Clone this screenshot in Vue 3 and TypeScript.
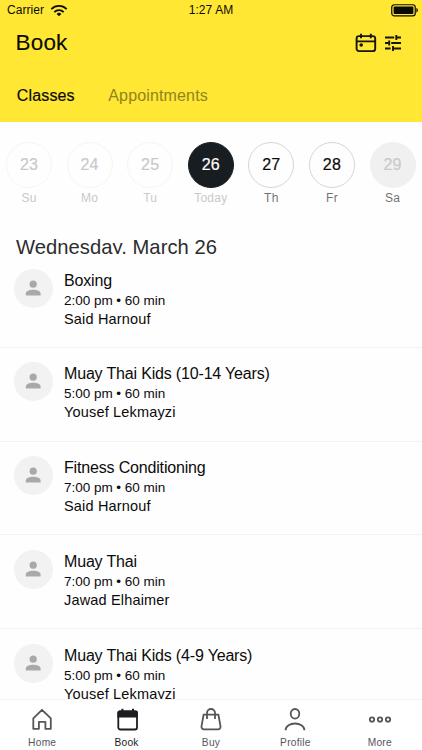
<script setup lang="ts">
interface Day { num: number; label: string; state: 'past' | 'today' | 'open' | 'closed' }
interface ClassItem { title: string; time: string; coach: string }

const days: Day[] = [
  { num: 23, label: 'Su', state: 'past' },
  { num: 24, label: 'Mo', state: 'past' },
  { num: 25, label: 'Tu', state: 'past' },
  { num: 26, label: 'Today', state: 'today' },
  { num: 27, label: 'Th', state: 'open' },
  { num: 28, label: 'Fr', state: 'open' },
  { num: 29, label: 'Sa', state: 'closed' },
]

const classes: ClassItem[] = [
  { title: 'Boxing', time: '2:00 pm • 60 min', coach: 'Said Harnouf' },
  { title: 'Muay Thai Kids (10-14 Years)', time: '5:00 pm • 60 min', coach: 'Yousef Lekmayzi' },
  { title: 'Fitness Conditioning', time: '7:00 pm • 60 min', coach: 'Said Harnouf' },
  { title: 'Muay Thai', time: '7:00 pm • 60 min', coach: 'Jawad Elhaimer' },
  { title: 'Muay Thai Kids (4-9 Years)', time: '5:00 pm • 60 min', coach: 'Yousef Lekmayzi' },
]

const tabs: string[] = ['Home', 'Book', 'Buy', 'Profile', 'More']
</script>

<template>
  <div class="screen">
    <header class="header">
      <div class="status">
        <div class="carrier">
          <span>Carrier</span>
          <svg width="18" height="13" viewBox="0 0 18 13" fill="none" stroke="#0b0b06" stroke-width="1.8">
            <path d="M1.3 5.1a11 11 0 0 1 15.4 0" />
            <path d="M4.3 8.1a6.8 6.8 0 0 1 9.4 0" />
            <path d="M9 12.2 6.6 9.9a3.5 3.5 0 0 1 4.8 0z" fill="#0b0b06" stroke="none" />
          </svg>
        </div>
        <span class="clock">1:27 AM</span>
        <svg class="battery" width="28" height="13" viewBox="0 0 28 13">
          <rect x=".75" y=".75" width="23.5" height="11.2" rx="2.6" fill="none" stroke="#0b0b06" stroke-width="1.2" />
          <rect x="2.6" y="2.6" width="19.8" height="7.5" rx=".8" fill="#0b0b06" />
          <path d="M25.4 4.1c1.9.6 1.9 3.9 0 4.5z" fill="#0b0b06" />
        </svg>
      </div>
      <div class="titlebar">
        <h1>Book</h1>
        <div class="actions">
          <svg width="22" height="20" viewBox="0 0 22 20" fill="none" stroke="#17160a" stroke-width="1.9">
            <rect x="1.6" y="3.1" width="18.6" height="15" rx="2.4" />
            <path d="M1.6 8.4h18.6M6 .7v4.6M15.8.7v4.6" />
            <circle cx="6.2" cy="12" r="1.8" fill="#17160a" stroke="none" />
          </svg>
          <svg width="18" height="18" viewBox="0 0 18 18" fill="none" stroke="#17160a" stroke-width="1.9">
            <path d="M1 3.5h9.2M12.6 3.5H17M12.3 1v5M1 9h4M7.2 9H17M5.2 6.5v5M1 14.5h5.6M8.8 14.5H17M9 12v5" />
          </svg>
        </div>
      </div>
      <nav class="sections">
        <span class="active">Classes</span>
        <span>Appointments</span>
      </nav>
    </header>

    <section class="week">
      <div v-for="d in days" :key="d.num" class="day" :class="d.state">
        <div class="num">{{ d.num }}</div>
        <div class="label">{{ d.label }}</div>
      </div>
    </section>

    <main class="schedule">
      <h2>Wednesday, March 26</h2>
      <article v-for="c in classes" :key="c.title" class="row">
        <div class="avatar">
          <svg width="17" height="17" viewBox="0 0 17 17" fill="#a9a9a9">
            <circle cx="8.2" cy="4.2" r="3.6" />
            <path d="M.8 15.4v-1.8C.8 11 4.4 9.8 8.2 9.8s7.4 1.2 7.4 3.8v1.8z" />
          </svg>
        </div>
        <div class="info">
          <h3>{{ c.title }}</h3>
          <p class="time">{{ c.time }}</p>
          <p class="coach">{{ c.coach }}</p>
        </div>
      </article>
    </main>

    <footer class="tabbar">
      <div v-for="t in tabs" :key="t" class="tab" :class="{ selected: t === 'Book' }">
        <svg width="26" height="26" viewBox="0 0 26 26" fill="none" stroke="currentColor" stroke-width="1.8">
          <path v-if="t === 'Home'" d="M4.3 12.4 13 3.8l8.8 8.6v10.4h-5.4v-6.9h-6.5v6.9H4.3z" stroke-linejoin="round" />
          <g v-else-if="t === 'Book'">
            <rect x="4.3" y="5.3" width="18.7" height="18.2" rx="2" />
            <path d="M3.4 11.6V6.6A2 2 0 0 1 5.4 4.5h16.5a2 2 0 0 1 2 2.1v5z" fill="currentColor" stroke="none" />
            <path d="M8.4 2.8v3M19 2.8v3" stroke-width="2" />
          </g>
          <g v-else-if="t === 'Buy'">
            <path d="M5.6 8.7h14.8l2.1 11.6a2.6 2.6 0 0 1-2.4 3H5.9a2.6 2.6 0 0 1-2.4-3z" stroke-linejoin="round" />
            <path d="M9 12.9V7a4 4 0 0 1 8 0v5.9" />
          </g>
          <g v-else-if="t === 'Profile'">
            <ellipse cx="13" cy="7.8" rx="4.3" ry="4.8" />
            <path d="M3.6 24.3c0-9.1 18.8-9.1 18.8 0" />
          </g>
          <g v-else>
            <circle cx="5" cy="13.5" r="2.2" />
            <circle cx="13" cy="13.5" r="2.2" />
            <circle cx="21" cy="13.5" r="2.2" />
          </g>
        </svg>
        <span>{{ t }}</span>
      </div>
    </footer>
  </div>
</template>

<style>
body { margin: 0; background: #fff; overflow: hidden; }
</style>

<style scoped>
* { box-sizing: border-box; }
h1, h2, h3, p { margin: 0; font-weight: 400; }
svg { display: block; flex: none; }
.screen {
  width: 422px; height: 750px; display: flex; flex-direction: column; overflow: hidden;
  background: #fefefe; color: #0b0b0b; font-family: "Liberation Sans", Arial, sans-serif;
}
.header { height: 122px; flex: none; background: #ffe733; color: #0b0b06; }
.status {
  height: 20px; display: grid; grid-template-columns: 1fr auto 1fr; align-items: center;
  padding: 0 3px 0 7px; font-size: 12px; line-height: 20px;
}
.carrier { display: flex; gap: 6px; align-items: center; letter-spacing: .05px; }
.clock { letter-spacing: .1px; padding-right: 4px; }
.battery { justify-self: end; }
.titlebar { height: 46px; display: flex; justify-content: space-between; padding: 0 20px 0 15.6px; align-items: center; }
h1 { font-size: 22.5px; line-height: 26px; letter-spacing: .15px; -webkit-text-stroke: .1px; }
.actions { display: flex; align-items: center; gap: 7.5px; }
.sections { display: flex; gap: 33.5px; padding: 20px 17px 0 16.8px; font-size: 16px; line-height: 20px; color: #91831f; letter-spacing: .15px; }
.active { color: #0b0b06; -webkit-text-stroke: .2px; }
.week { flex: none; height: 106px; padding: 20px 0 0 6px; display: flex; gap: 14.6px; }
.day { width: 46px; flex: none; text-align: center; color: #c9c9c9; }
.num {
  width: 46px; height: 46px; border-radius: 50%; border: 1px solid #f5f5f5;
  font-size: 16px; line-height: 44px; letter-spacing: .2px; -webkit-text-stroke: .2px;
}
.label { font-size: 12px; line-height: 14px; margin-top: 3px; letter-spacing: .25px; }
.today .num { background: #171d20; border-color: #171d20; color: #fff; }
.open .num { border-color: #d5d5d5; color: #0b0b0b; }
.open .label, .closed .label { color: #747474; }
.closed .num { background: #f0f0f0; border-color: #f0f0f0; }
.schedule { flex: 1; min-height: 0; overflow: hidden; }
h2 { height: 26px; overflow: hidden; padding: 7px 0 0 16px; font-size: 20.2px; line-height: 24px; color: #2c2c2c; letter-spacing: .05px; }
.row { height: 93.75px; display: flex; gap: 11.5px; padding: 14.6px 0 0 13.5px; border-bottom: 1px solid #f3f3f3; }
.avatar { width: 39px; height: 39px; border-radius: 50%; background: #f2f2f2; display: grid; place-items: center; }
h3 { font-size: 16px; line-height: 22px; letter-spacing: -.17px; padding-top: 1px; }
.time { font-size: 13.5px; line-height: 18px; letter-spacing: -.02px; }
.coach { font-size: 14.5px; line-height: 19px; letter-spacing: .17px; }
.tabbar { height: 51px; flex: none; display: flex; border-top: 1px solid #f3f3f3; background: #fff; }
.tab { flex: 1; display: flex; flex-direction: column; align-items: center; padding-top: 6px; color: #55555a; font-size: 10.2px; line-height: 14px; letter-spacing: .25px; gap: 4px; }
.selected { color: #1c1d21; }
</style>
